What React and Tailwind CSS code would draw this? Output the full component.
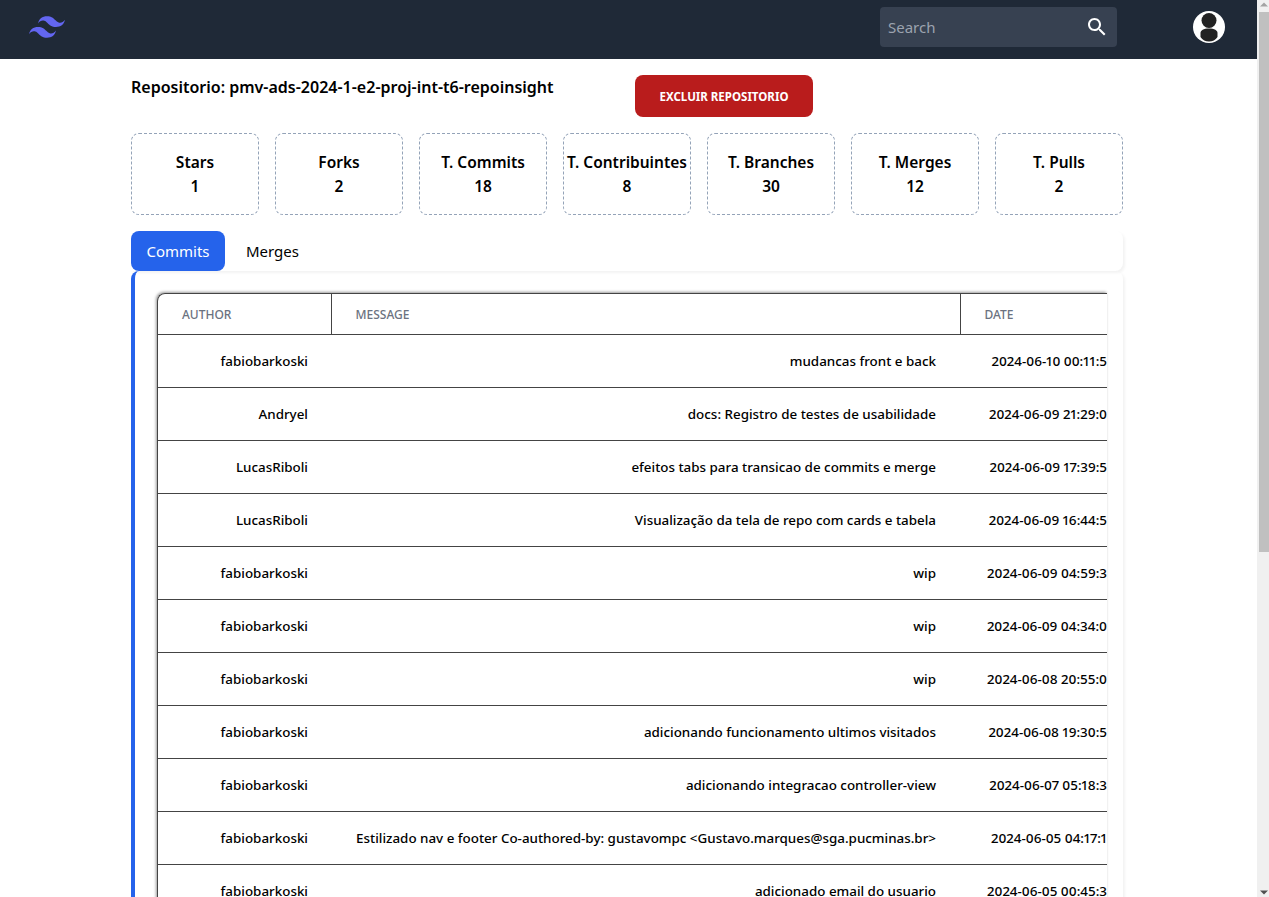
import React from 'react'

const FONT = { fontFamily: '"Noto Sans", sans-serif' }

const STATS = [
  ['Stars', 1],
  ['Forks', 2],
  ['T. Commits', 18],
  ['T. Contribuintes', 8],
  ['T. Branches', 30],
  ['T. Merges', 12],
  ['T. Pulls', 2],
]

const COMMITS = [
  ['fabiobarkoski', 'mudancas front e back', '2024-06-10 00:11:5'],
  ['Andryel', 'docs: Registro de testes de usabilidade', '2024-06-09 21:29:0'],
  ['LucasRiboli', 'efeitos tabs para transicao de commits e merge', '2024-06-09 17:39:5'],
  ['LucasRiboli', 'Visualização da tela de repo com cards e tabela', '2024-06-09 16:44:5'],
  ['fabiobarkoski', 'wip', '2024-06-09 04:59:3'],
  ['fabiobarkoski', 'wip', '2024-06-09 04:34:0'],
  ['fabiobarkoski', 'wip', '2024-06-08 20:55:0'],
  ['fabiobarkoski', 'adicionando funcionamento ultimos visitados', '2024-06-08 19:30:5'],
  ['fabiobarkoski', 'adicionando integracao controller-view', '2024-06-07 05:18:3'],
  ['fabiobarkoski', 'Estilizado nav e footer Co-authored-by: gustavompc <Gustavo.marques@sga.pucminas.br>', '2024-06-05 04:17:1'],
  ['fabiobarkoski', 'adicionado email do usuario', '2024-06-05 00:45:3'],
]

function Navbar() {
  return (
    <nav className="flex h-[59px] shrink-0 items-center bg-[#1f2937] pb-[5px] pl-[29px] pr-[32px]">
      <svg width="36" height="36" viewBox="0 0 24 24" className="fill-[#6366f1]">
        <path d="M12.001 4.8c-3.2 0-5.2 1.6-6 4.8 1.2-1.6 2.6-2.2 4.2-1.8.913.228 1.565.89 2.288 1.624C13.666 10.618 15.027 12 18.001 12c3.2 0 5.2-1.6 6-4.8-1.2 1.6-2.6 2.2-4.2 1.8-.913-.228-1.565-.89-2.288-1.624C16.337 6.182 14.976 4.8 12.001 4.8zm-6 7.2c-3.2 0-5.2 1.6-6 4.8 1.2-1.6 2.6-2.2 4.2-1.8.913.228 1.565.89 2.288 1.624 1.177 1.194 2.538 2.576 5.512 2.576 3.2 0 5.2-1.6 6-4.8-1.2 1.6-2.6 2.2-4.2 1.8-.913-.228-1.565-.89-2.288-1.624C10.337 13.382 8.976 12 6.001 12z" />
      </svg>
      <div className="ml-auto flex h-10 w-[237px] items-center rounded bg-[#374151] pl-2 pr-2">
        <span className="text-[15px] text-[#9ca3af]">Search</span>
        <svg width="24" height="24" viewBox="0 0 24 24" className="ml-auto fill-white">
          <path d="M15.5 14h-.79l-.28-.27C15.41 12.59 16 11.11 16 9.5 16 5.91 13.09 3 9.5 3S3 5.91 3 9.5 5.91 16 9.5 16c1.61 0 3.09-.59 4.23-1.57l.27.28v.79l5 4.99L20.49 19l-4.99-5zm-6 0C7.01 14 5 11.99 5 9.5S7.01 5 9.5 5 14 7.01 14 9.5 11.99 14 9.5 14z" />
        </svg>
      </div>
      <svg width="32" height="32" viewBox="0 0 32 32" className="ml-[76px]">
        <circle cx="16" cy="16" r="16" fill="#fff" />
        <circle cx="16" cy="9.500" r="7.500" fill="#222" />
        <path d="M7.500 22c0-2.700 3-4.500 8.500-4.500s8.500 1.800 8.500 4.500v4c-2 3-5 4.500-8.500 4.500s-6.500-1.500-8.500-4.500z" fill="#222" />
      </svg>
    </nav>
  )
}

function StatCard({ label, value }) {
  return (
    <div className="flex h-[82px] w-32 flex-col items-center justify-center rounded-lg border border-dashed border-[#94a3b8] text-[15.5px] font-semibold leading-6 text-black">
      <span className="whitespace-nowrap">{label}</span>
      <span>{value}</span>
    </div>
  )
}

function CommitsTable() {
  return (
    <div className="overflow-hidden rounded-tl-lg border-l border-t border-[#444] shadow-[-1px_-1px_3px_rgba(0,0,0,0.4)]">
      <table className="w-[949px] table-fixed border-collapse text-left">
        <colgroup>
          <col className="w-[173px]" />
          <col className="w-[629px]" />
          <col />
        </colgroup>
        <thead>
          <tr className="h-10 border-b border-[#444] text-xs uppercase text-[#6b7280]">
            <th className="border-r border-[#444] px-6 pt-[3px] font-medium">Author</th>
            <th className="border-r border-[#444] px-6 pt-[3px] font-medium">Message</th>
            <th className="px-6 pt-[3px] font-medium">Date</th>
          </tr>
        </thead>
        <tbody>
          {COMMITS.map((c, i) => (
            <tr key={i} className="h-[53px] border-b border-[#444] text-[13.4px] font-medium text-black">
              <td className="whitespace-nowrap pl-6 pr-[23px] pt-[2px] text-right">{c[0]}</td>
              <td className="whitespace-nowrap px-6 pt-[2px] text-right">{c[1]}</td>
              <td className="whitespace-nowrap pt-[2px] text-right proportional-nums">{c[2]}</td>
            </tr>
          ))}
        </tbody>
      </table>
    </div>
  )
}

export default function App() {
  return (
    <div className="flex h-screen overflow-hidden bg-white" style={FONT}>
      <div className="flex min-w-0 flex-1 flex-col">
        <Navbar />
        <main className="ml-[131px] flex w-[992px] flex-col">
          <div className="mt-4 flex h-[42px] items-start">
            <h1 className="whitespace-nowrap text-base font-semibold leading-6 text-black">
              Repositorio: pmv-ads-2024-1-e2-proj-int-t6-repoinsight
            </h1>
            <button className="ml-auto mr-[310px] h-[42px] w-[178px] rounded-lg bg-[#b91c1c] pt-px text-[11.5px] font-bold text-white">
              EXCLUIR REPOSITORIO
            </button>
          </div>

          <div className="mt-4 flex gap-4">
            {STATS.map(([label, value]) => (
              <StatCard key={label} label={label} value={value} />
            ))}
          </div>

          <div className="mt-4 flex h-10 rounded-r-lg shadow-[2px_2px_3px_rgba(0,0,0,0.05)]">
            <div className="flex w-[94px] items-center justify-center rounded-lg bg-[#2563eb] text-[15px] text-white">Commits</div>
            <div className="ml-[21px] flex items-center text-[15px] text-black">Merges</div>
          </div>

          <div className="rounded-r-lg rounded-tl-lg border-l-4 border-[#2563eb] py-[22px] pl-[22px] pr-4 shadow-[2px_2px_3px_rgba(0,0,0,0.05)]">
            <CommitsTable />
          </div>
        </main>
      </div>
      {/* scrollbar */}
      <div className="flex w-3 shrink-0 flex-col bg-[#f0f0f0] pl-[2px]">
        <svg width="10" height="12" viewBox="0 0 10 12" className="shrink-0">
          <polygon points="5,2.500 9,6.500 1,6.500" fill="#a3a3a3" />
        </svg>
        <div className="h-[540px] bg-[#c0c0c0]" />
        <svg width="10" height="12" viewBox="0 0 10 12" className="mt-auto shrink-0">
          <polygon points="1,5.500 9,5.500 5,9.500" fill="#505050" />
        </svg>
      </div>
    </div>
  )
}
